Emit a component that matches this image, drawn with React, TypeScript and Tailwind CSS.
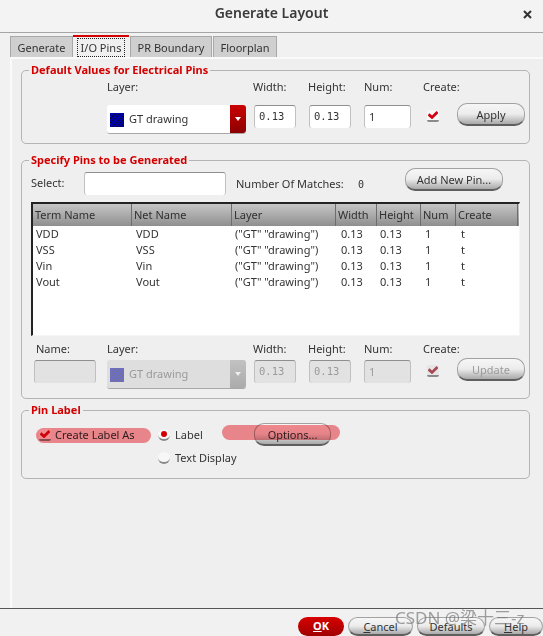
import React from "react";

const sans = "font-['Noto_Sans','Open_Sans',sans-serif]";
const mono = "font-['DejaVu_Sans_Mono',monospace]";

function Btn({ children, w, h = "h-[23px]", dis }: { children: React.ReactNode; w: string; h?: string; dis?: boolean }) {
  return (
    <div className={`${w} ${h} shrink-0 flex items-center justify-center rounded-[10px] border border-[#a2a2a2] border-b-[#5f5f5f] border-b-2 bg-gradient-to-b from-[#f6f6f6] via-[#ececec] to-[#a9a9a9] text-[11px] leading-none ${dis ? "text-[#9b9b9b]" : "text-[#333]"}`}>
      {children}
    </div>
  );
}

function Field({ v, w, dis, isMono = true }: { v?: string; w: string; dis?: boolean; isMono?: boolean }) {
  return (
    <div className={`${w} h-[23px] shrink-0 rounded-[3px] border-t border-x border-[#c0c0c0] border-t-[#8f8f8f] flex items-center pl-[4px] ${isMono ? `${mono} text-[10.5px]` : "text-[11px]"} ${dis ? "bg-[#e2e2e2] text-[#9a9a9a]" : "bg-white text-[#333]"}`}>
      {v}
    </div>
  );
}

function Check({ dis }: { dis?: boolean }) {
  return (
    <div className={`w-[12px] h-[12px] shrink-0 rounded-[2px] border-b-2 border-[#8a8a8a] flex items-center justify-center ${dis ? "bg-[#e6e6e6]" : "bg-[#f7f7f7]"}`}>
      <svg width="10" height="8" viewBox="0 0 10 8">
        <path d="M0.5 3.4 L4 6.4 L9.5 1" fill="none" stroke={dis ? "#a84a55" : "#d4000f"} strokeWidth="2.8" />
      </svg>
    </div>
  );
}

function Select({ dis, h }: { dis?: boolean; h: string }) {
  return (
    <div className={`w-[139px] ${h} shrink-0 rounded-[3px] flex items-center border-b border-[#a8a8a8] ${dis ? "bg-[#dedede] text-[#9a9a9a]" : "bg-white text-[#333]"}`}>
      <svg width="14" height="14" viewBox="0 0 14 14" className={`ml-[3px] mr-[5px] mt-[1px] shrink-0 ${dis ? "opacity-50" : ""}`}>
        <rect width="14" height="14" fill="#0000a8" />
        <path d="M-2 8 L8 -2 M-2 12 L12 -2 M2 14 L14 2 M6 14 L14 6 M10 14 L14 10" stroke="#0a0a2a" strokeWidth="1" />
      </svg>
      <span className="text-[11px] grow mt-[1px]">GT drawing</span>
      <div className={`w-[16px] h-full rounded-r-[3px] flex items-center justify-center ${dis ? "bg-gradient-to-b from-[#c2c2c2] to-[#ababab]" : "bg-gradient-to-b from-[#cc0000] to-[#8c0000]"}`}>
        <div className={`w-0 h-0 border-x-[3.5px] border-x-transparent border-t-[4px] ${dis ? "border-t-[#eee]" : "border-t-white"}`} />
      </div>
    </div>
  );
}

function Group({ title, cls, children }: { title: string; cls: string; children: React.ReactNode }) {
  return (
    <div className={`relative ${cls} rounded-[5px] border border-[#b4b4b4]`}>
      <div className="absolute left-[7px] top-[-9px] px-[2px] bg-[#efefef] text-[11px] leading-[16px] font-bold text-[#d40000]">{title}</div>
      {children}
    </div>
  );
}

const rows = ["VDD", "VSS", "Vin", "Vout"];
const cols = [
  { n: "Term Name", w: "w-[99px]" },
  { n: "Net Name", w: "w-[100px]" },
  { n: "Layer", w: "w-[104px]" },
  { n: "Width", w: "w-[41px]" },
  { n: "Height", w: "w-[44px]" },
  { n: "Num", w: "w-[35px]" },
  { n: "Create", w: "w-[62px]" },
];

function Labels() {
  return (
    <>
      <span className="w-[146px] shrink-0">Layer:</span>
      <span className="w-[55px] shrink-0">Width:</span>
      <span className="w-[56px] shrink-0">Height:</span>
      <span className="w-[59px] shrink-0">Num:</span>
      <span>Create:</span>
    </>
  );
}

export default function App() {
  return (
    <div className={`relative w-[543px] h-[636px] overflow-hidden bg-[#f1f1f1] text-[11px] text-[#333] ${sans}`}>
      <div className="h-[33px] flex items-center justify-center border-b border-[#a5a5a5] bg-[#f3f3f3] relative">
        <span className="text-[14px] font-semibold text-[#3a3a3a] mt-[-8px]">Generate Layout</span>
        <svg className="absolute left-[523px] top-[10px]" width="9" height="9" viewBox="0 0 9 9">
          <path d="M1 1 L8 8 M8 1 L1 8" stroke="#333" strokeWidth="2" />
        </svg>
      </div>

      <div className="flex items-end h-[24px] pl-[10px] pt-[2px]">
        <div className="w-[63px] h-[21px] pt-[2px] flex items-center justify-center bg-[#cfcfcf] border border-b-0 border-[#a8a8a8]">Generate</div>
        <div className="w-[56px] h-[22px] flex items-center justify-center bg-[#f0f0f0] border-t-2 border-[#d40000]">
          <span className="border border-dotted border-[#222] px-[3px] leading-[17px]">I/O Pins</span>
        </div>
        <div className="ml-[1px] w-[82px] h-[21px] pt-[2px] flex items-center justify-center bg-[#cfcfcf] border border-b-0 border-[#a8a8a8]">PR Boundary</div>
        <div className="ml-[1px] w-[64px] h-[21px] pt-[2px] flex items-center justify-center bg-[#cfcfcf] border border-b-0 border-[#a8a8a8]">Floorplan</div>
      </div>

      <div className="ml-[10px] h-[552px] bg-[#efefef] border-t-2 border-l-2 border-[#fafafa] pl-[9px] pt-[11px]">
        <Group title="Default Values for Electrical Pins" cls="w-[509px] h-[74px]">
          <div className="flex pl-[85px] pt-[8px] leading-[16px]"><Labels /></div>
          <div className="flex items-start pl-[85px] pt-[10px]">
            <Select h="h-[29px]" />
            <div className="w-[8px]" />
            <Field v="0.13" w="w-[42px]" />
            <div className="w-[13px]" />
            <Field v="0.13" w="w-[42px]" />
            <div className="w-[13px]" />
            <Field v="1" w="w-[47px]" isMono={false} />
            <div className="w-[16px]" />
            <div className="mt-[5px]"><Check /></div>
            <div className="w-[18px]" />
            <div className="mt-[-2px]"><Btn w="w-[68px]">Apply</Btn></div>
          </div>
        </Group>

        <Group title="Specify Pins to be Generated" cls="mt-[16px] w-[509px] h-[239px]">
          <div className="flex items-start pl-[9px] pt-[7px]">
            <span className="w-[53px] leading-[16px] mt-[7px]">Select:</span>
            <div className="mt-[4px]"><Field w="w-[142px]" /></div>
            <span className="ml-[10px] w-[122px] leading-[16px] mt-[8px]">Number Of Matches:</span>
            <span className={`${mono} text-[10px] leading-[16px] mt-[9px] w-[47px]`}>0</span>
            <Btn w="w-[98px]">Add New Pin...</Btn>
          </div>
          <div className="ml-[9px] mt-[7px] w-[489px] h-[134px] bg-white border-t-2 border-l-2 border-[#222] border-r border-b border-r-[#f5f5f5] border-b-[#f5f5f5]">
            <div className="flex h-[22px] bg-gradient-to-b from-[#c6c6c6] to-[#8f8f8f] text-[#303030]">
              {cols.map((c) => (
                <div key={c.n} className={`${c.w} pl-[2px] flex items-center border-r border-[#6d6d6d]`}>{c.n}</div>
              ))}
            </div>
            <div>
              {rows.map((r) => (
                <div key={r} className="flex h-[16px] items-center leading-[16px]">
                  <div className="w-[99px] pl-[3px]">{r}</div>
                  <div className="w-[100px] pl-[4px]">{r}</div>
                  <div className="w-[104px] pl-[3px]">("GT" "drawing")</div>
                  <div className="w-[41px] pl-[5px]">0.13</div>
                  <div className="w-[44px] pl-[3px]">0.13</div>
                  <div className="w-[35px] pl-[4px]">1</div>
                  <div className="w-[62px] pl-[5px]">t</div>
                </div>
              ))}
            </div>
          </div>
          <div className="flex pl-[85px] pt-[5px] leading-[16px] relative">
            <span className="absolute left-[14px]">Name:</span>
            <Labels />
          </div>
          <div className="flex items-start pl-[12px] pt-[3px]">
            <Field w="w-[62px]" dis />
            <div className="w-[11px]" />
            <Select dis h="h-[29px]" />
            <div className="w-[8px]" />
            <Field v="0.13" w="w-[42px]" dis />
            <div className="w-[13px]" />
            <Field v="0.13" w="w-[42px]" dis />
            <div className="w-[13px]" />
            <Field v="1" w="w-[47px]" dis isMono={false} />
            <div className="w-[16px]" />
            <div className="mt-[5px]"><Check dis /></div>
            <div className="w-[18px]" />
            <div className="mt-[-2px]"><Btn w="w-[68px]" dis>Update</Btn></div>
          </div>
        </Group>

        <Group title="Pin Label" cls="mt-[11px] w-[509px] h-[69px]">
          <div className="flex pl-[17px] pt-[12px]">
            <div className="flex items-center h-[24px] w-[119px] shrink-0">
              <Check />
              <span className="ml-[4px]">Create Label As</span>
            </div>
            <div className="flex flex-col gap-[7px] pt-[4px] w-[96px] shrink-0">
              <div className="flex items-center h-[16px]">
                <div className="w-[12px] h-[12px] rounded-full bg-[#f7f7f7] border-b-2 border-[#888] flex items-center justify-center">
                  <div className="w-[6px] h-[6px] rounded-full bg-[#d40000]" />
                </div>
                <span className="ml-[5px]">Label</span>
              </div>
              <div className="flex items-center h-[16px]">
                <div className="w-[12px] h-[12px] rounded-full bg-[#f7f7f7] border-b-2 border-[#888]" />
                <span className="ml-[5px]">Text Display</span>
              </div>
            </div>
            <Btn w="w-[77px]">Options...</Btn>
          </div>
        </Group>
      </div>

      <div className="absolute left-[36px] top-[428px] w-[115px] h-[15px] rounded-full bg-[#f88e93] mix-blend-multiply" />
      <div className="absolute left-[222px] top-[425px] w-[118px] h-[15px] rounded-full bg-[#f88e93] mix-blend-multiply" />

      <div className="absolute left-0 right-0 top-[608px] h-[28px] bg-[#f1f1f1] border-t border-[#555] flex items-start pl-[298px] pt-[8px] gap-[4px]">
        <div className="w-[47px] h-[19px] rounded-[10px] bg-gradient-to-b from-[#d80000] to-[#a00000] text-white font-bold text-[11px] flex items-center justify-center">
          <span className="underline">O</span>K
        </div>
        <Btn w="w-[65px]" h="h-[19px]"><span className="underline">C</span>ancel</Btn>
        <Btn w="w-[68px]" h="h-[19px]">Defaults</Btn>
        <Btn w="w-[54px]" h="h-[19px]"><span className="underline">H</span>elp</Btn>
      </div>

      <div className="absolute left-[395px] top-[606px] text-[17px] leading-[24px] text-[#777]/70 font-['Noto_Sans','Noto_Sans_CJK_SC',sans-serif]">CSDN @梁十三-z</div>
    </div>
  );
}
